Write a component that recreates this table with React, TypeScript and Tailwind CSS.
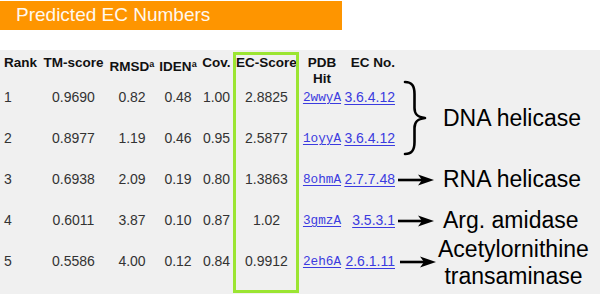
import React from 'react';

type Row = {
  rank: string;
  tm: string;
  rmsd: string;
  iden: string;
  cov: string;
  ec: string;
  pdb: string;
  ecNo: string;
};

const rows: Row[] = [
  { rank: '1', tm: '0.9690', rmsd: '0.82', iden: '0.48', cov: '1.00', ec: '2.8825', pdb: '2wwyA', ecNo: '3.6.4.12' },
  { rank: '2', tm: '0.8977', rmsd: '1.19', iden: '0.46', cov: '0.95', ec: '2.5877', pdb: '1oyyA', ecNo: '3.6.4.12' },
  { rank: '3', tm: '0.6938', rmsd: '2.09', iden: '0.19', cov: '0.80', ec: '1.3863', pdb: '8ohmA', ecNo: '2.7.7.48' },
  { rank: '4', tm: '0.6011', rmsd: '3.87', iden: '0.10', cov: '0.87', ec: '1.02', pdb: '3gmzA', ecNo: '3.5.3.1' },
  { rank: '5', tm: '0.5586', rmsd: '4.00', iden: '0.12', cov: '0.84', ec: '0.9912', pdb: '2eh6A', ecNo: '2.6.1.11' },
];

const Arrow = () => (
  <svg width="36" height="12" viewBox="0 0 36 12" className="shrink-0">
    <line x1="0" y1="6" x2="26" y2="6" stroke="#000" strokeWidth="2.6" />
    <polygon points="20,0.5 36,6 20,11.5 24,6" fill="#000" />
  </svg>
);

const Brace = () => (
  <svg width="24" height="76" viewBox="0 0 24 76" fill="none" className="shrink-0">
    <path
      d="M2 2 C9 2 11.5 6 11.5 14 L11.5 28 C11.5 34 14 37 22 38 C14 39 11.5 42 11.5 48 L11.5 62 C11.5 70 9 74 2 74"
      stroke="#000"
      strokeWidth="2.6"
      strokeLinecap="round"
      strokeLinejoin="round"
    />
  </svg>
);

const Note = ({ children }: { children: React.ReactNode }) => (
  <div className="flex items-center gap-[9px] pl-[2px]">
    <Arrow />
    <span className="text-[23px] leading-[27px] text-black text-center">{children}</span>
  </div>
);

const linkCls = 'text-[#3b3bdf] underline underline-offset-2';
const headCls = 'font-bold text-[13.5px] leading-[16px] text-[#111]';

export default function App() {
  return (
    <div
      className="w-[600px] h-[294px] bg-white overflow-hidden"
      style={{ fontFamily: '"Liberation Sans", Arial, sans-serif' }}
    >
      {/* Title bar */}
      <div className="h-[50px] pt-[1px]">
        <div className="w-[342px] h-[29px] bg-[#fe9500] flex items-center pl-[16px]">
          <span className="text-[19px] text-[#fff8ee]">Predicted EC Numbers</span>
        </div>
      </div>

      {/* Table */}
      <div className="relative h-[244px] bg-[#f0f0f0]">
        <div className="grid grid-cols-[41px_65px_52px_40px_37px_63px_48px_50px_1fr] grid-rows-[27px_repeat(5,41px)] text-[14px]">
          {/* Header */}
          <div className={`pt-[5px] pl-[4px] ${headCls}`}>Rank</div>
          <div className={`pt-[5px] text-center ${headCls}`}>TM-score</div>
          <div className={`pt-[9px] text-center ${headCls}`}>
            RMSD<span className="text-[9px] align-top leading-none relative top-[1px]">a</span>
          </div>
          <div className={`pt-[9px] text-center ${headCls}`}>
            IDEN<span className="text-[9px] align-top leading-none relative top-[1px]">a</span>
          </div>
          <div className={`pt-[5px] text-center ${headCls}`}>Cov.</div>
          <div className={`pt-[5px] text-center ${headCls}`}>EC-Score</div>
          <div className={`pt-[5px] text-center ${headCls} leading-[15px]`}>
            PDB
            <br />
            Hit
          </div>
          <div className={`pt-[5px] text-right pr-[1px] ${headCls}`}>EC No.</div>
          <div />

          {rows.map((r, i) => (
            <React.Fragment key={r.rank}>
              <div className="flex items-center pl-[4px] text-[#333]">{r.rank}</div>
              <div className="flex items-center justify-center text-[#333]">{r.tm}</div>
              <div className="flex items-center justify-center text-[#333]">{r.rmsd}</div>
              <div className="flex items-center justify-center text-[#333]">{r.iden}</div>
              <div className="flex items-center justify-center text-[#333]">{r.cov}</div>
              <div className="flex items-center justify-center text-[#333]">{r.ec}</div>
              <div className="flex items-center justify-center">
                <a className={`${linkCls} text-[12.7px]`} style={{ fontFamily: '"Liberation Mono", "Courier New", monospace' }}>
                  {r.pdb}
                </a>
              </div>
              <div className="flex items-center justify-end pr-[1px]">
                <a className={linkCls}>{r.ecNo}</a>
              </div>
              {i === 0 && (
                <div className="row-span-2 flex items-center gap-[16px] pl-[7px]">
                  <Brace />
                  <span className="text-[23px] text-black">DNA helicase</span>
                </div>
              )}
              {i === 2 && <Note>RNA helicase</Note>}
              {i === 3 && <Note>Arg. amidase</Note>}
              {i === 4 && (
                <div className="flex items-center gap-[2px] pl-[4px]">
                  <Arrow />
                  <span className="text-[23px] leading-[27px] text-black text-center pt-[3px]">
                    Acetylornithine
                    <br />
                    transaminase
                  </span>
                </div>
              )}
            </React.Fragment>
          ))}
        </div>

        {/* Highlight box around EC-Score column */}
        <div className="absolute left-[233px] top-[2px] w-[66px] h-[241px] border-[3px] border-[#9be532] pointer-events-none" />
      </div>
    </div>
  );
}
